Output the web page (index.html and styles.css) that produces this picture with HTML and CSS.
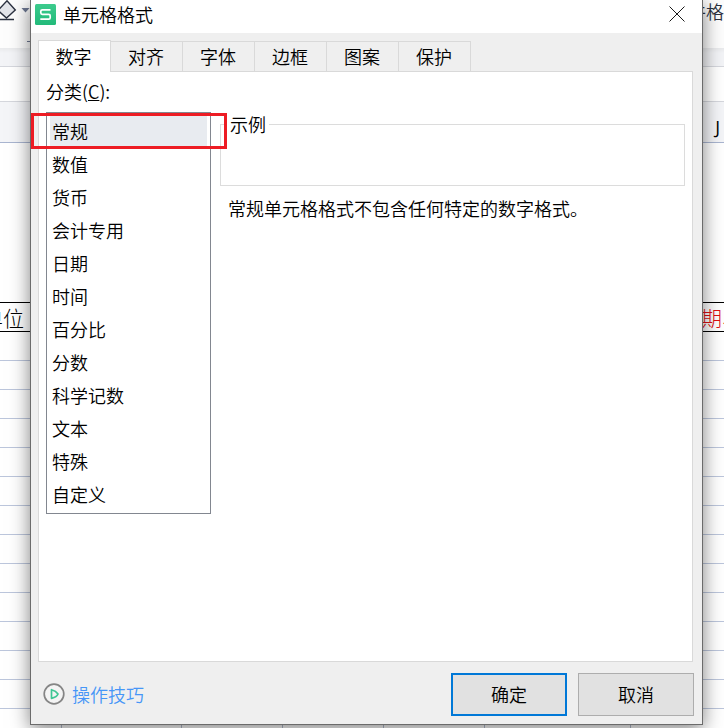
FILE: index.html
```html
<!DOCTYPE html>
<html lang="zh-CN">
<head>
<meta charset="utf-8">
<title>单元格格式</title>
<link rel="stylesheet" href="styles.css">
</head>
<body>
<div class="app">
  <div class="toolbar">
    <div class="toolbar-tools">
      <svg class="eraser" viewBox="0 0 30 42" width="30" height="42" aria-hidden="true">
        <path d="M-2 10.500L7 .8L15.300 10L6.500 18L-2 10.500" fill="#e3e5ea" stroke="#2b3140" stroke-width="1.400"/>
        <path d="M0 19.500H14" stroke="#2b3140" stroke-width="1.500"/>
        <path d="M21.500 8h8l-4 4.500z" fill="#6d7791"/>
        <path d="M27 41.500h3" stroke="#6d7791"/>
      </svg>
    </div>
    <span class="toolbar-label">条件格</span>
  </div>
  <div class="ribbon-gap"></div>
  <div class="formula-bar"></div>
  <div class="column-head"><span>J</span></div>
  <div class="sheet">
    <div class="head-row"><span class="unit">单位</span><span class="period">期、</span></div>
    <div class="grid-rows"></div>
    <div class="grid-foot"><i></i><i></i><i></i><i></i><i></i><i></i></div>
  </div>
</div>

<div class="dialog" role="dialog" aria-labelledby="dialog-title">
  <header class="titlebar">
    <svg class="logo" viewBox="0 0 21 21" width="21" height="21" aria-hidden="true">
      <defs><linearGradient id="g" x1="0" y1="0" x2="0" y2="1"><stop offset="0" stop-color="#3ccb8d"/><stop offset="1" stop-color="#22ba7a"/></linearGradient></defs>
      <rect width="21" height="21" rx="1.500" fill="url(#g)"/>
      <path d="M15.500 5.800H7.300Q5.800 5.800 5.800 7.300V8.800Q5.800 10.300 7.300 10.300H13.700Q15.200 10.300 15.200 11.800V13.700Q15.200 15.200 13.700 15.200H5.300" fill="none" stroke="#fff" stroke-width="1.700"/>
    </svg>
    <h1 id="dialog-title">单元格格式</h1>
    <button class="close" type="button" aria-label="关闭">
      <svg viewBox="0 0 16 16" width="16" height="16"><path d="M.5.5l15 15M15.500.5l-15 15" stroke="#000" stroke-width=".9"/></svg>
    </button>
  </header>
  <div class="tabs" role="tablist">
    <button type="button" role="tab" class="tab active" aria-selected="true">数字</button>
    <button type="button" role="tab" class="tab">对齐</button>
    <button type="button" role="tab" class="tab">字体</button>
    <button type="button" role="tab" class="tab">边框</button>
    <button type="button" role="tab" class="tab">图案</button>
    <button type="button" role="tab" class="tab">保护</button>
  </div>
  <main class="panel">
    <section class="category">
      <label id="category-label" for="category">分类(<u>C</u>):</label>
      <ul id="category" class="list" role="listbox" aria-labelledby="category-label">
        <li role="option" class="selected" aria-selected="true">常规</li>
        <li role="option">数值</li>
        <li role="option">货币</li>
        <li role="option">会计专用</li>
        <li role="option">日期</li>
        <li role="option">时间</li>
        <li role="option">百分比</li>
        <li role="option">分数</li>
        <li role="option">科学记数</li>
        <li role="option">文本</li>
        <li role="option">特殊</li>
        <li role="option">自定义</li>
      </ul>
      <div class="highlight"></div>
    </section>
    <section class="detail">
      <fieldset><legend>示例</legend></fieldset>
      <p>常规单元格格式不包含任何特定的数字格式。</p>
    </section>
  </main>
  <footer class="footer">
    <a href="#tips" class="tips">
      <svg viewBox="0 0 22 22" width="22" height="22" aria-hidden="true">
        <circle cx="11" cy="11" r="9.800" fill="#f4f4f4" stroke="#858585" stroke-width="1.700"/>
        <path d="M8.500 6.700V15.300Q14 14 15 11Q13 8 8.500 6.700Z" fill="none" stroke="#3fc694" stroke-width="1.700" stroke-linejoin="round"/>
      </svg>
      <span>操作技巧</span>
    </a>
    <button type="button" class="btn primary">确定</button>
    <button type="button" class="btn">取消</button>
  </footer>
</div>
</body>
</html>
```
FILE: styles.css
```css
* { box-sizing: border-box; }

body {
  margin: 0;
  height: 100vh;
  overflow: hidden;
  position: relative;
  font: 18px/22px "Noto Sans CJK SC", sans-serif;
  font-weight: 350;
  color: #000;
  background: #fff;
}

button { font: inherit; color: inherit; padding: 0; }

/* Spreadsheet behind the dialog */
.app { height: 100%; display: flex; flex-direction: column; }
.toolbar {
  flex: 0 0 48px;
  display: flex;
  justify-content: space-between;
  background: #fdfdfd;
  color: #2b3140;
}
.eraser { display: block; }
.toolbar-label { width: 28px; display: flex; justify-content: flex-end; white-space: nowrap; }
.ribbon-gap {
  flex: 0 0 19px;
  background: linear-gradient(#e9eaec, #f3f4f7 5px);
  border-bottom: 1px solid #d5d7dd;
}
.formula-bar { flex: 0 0 35px; border-bottom: 1px solid #d5d7dd; }
.column-head {
  flex: 0 0 41px;
  padding: 14px 4px 0 0;
  text-align: right;
  background: #f4f5f8;
  border-bottom: 1px solid #a9b5d0;
  font-family: "Open Sans", sans-serif;
  font-weight: 400;
}
.sheet { flex: 1; display: flex; flex-direction: column; padding-top: 159px; }
.head-row {
  flex: 0 0 30px;
  display: flex;
  justify-content: space-between;
  align-items: center;
  border: solid #000;
  border-width: 1px 0;
  font-size: 21px;
  font-weight: 300;
  overflow: hidden;
}
.unit { width: 24px; display: flex; justify-content: flex-end; white-space: nowrap; }
.period { width: 23px; color: #e01010; white-space: nowrap; }
.grid-rows {
  flex: 1;
  background: repeating-linear-gradient(transparent 0 28px, #bcc6dc 28px 29px);
}
.grid-foot { flex: 0 0 4px; display: flex; }
.grid-foot i { flex: 0 0 101px; border-right: 1px solid #b4bccf; }
.grid-foot i:first-child { flex-basis: 62px; }
.grid-foot i:nth-child(2) { flex-basis: 120px; }
.grid-foot i:last-child { flex-basis: 146px; }

/* Dialog window */
.dialog {
  position: absolute;
  inset: 0 21px 3px 30px;
  display: flex;
  flex-direction: column;
  background: #efefef;
  border: solid #6b6b6b;
  border-width: 0 1px 1px;
  box-shadow: 0 4px 18px rgba(0, 0, 0, .5);
}
.titlebar {
  flex: 0 0 33px;
  display: flex;
  align-items: center;
  gap: 7px;
  padding: 0 17px 5px 4px;
  background: #fff;
}
h1 { margin: 0; flex: 1; font-size: 18px; font-weight: inherit; }
.close { height: 16px; border: 0; background: none; }
.close svg { display: block; }

.tabs { flex: 0 0 39px; display: flex; align-items: flex-end; padding: 0 7px; margin-bottom: -1px; }
.tab {
  width: 72px;
  height: 31px;
  padding: 0 1px 2px 0;
  border: 1px solid #d9d9d9;
  border-left: 0;
  background: #efefef;
}
.tab.active {
  width: 73px;
  height: 32px;
  padding-right: 2px;
  border-left: 1px solid #d9d9d9;
  border-bottom: 0;
  background: #fff;
  z-index: 1;
}

.panel {
  flex: 1;
  display: flex;
  gap: 9px;
  margin: 0 9px 0 7px;
  padding: 8px 7px;
  background: #fff;
  border: 1px solid #d9d9d9;
}
.category { position: relative; flex: 0 0 165px; }
.category label { display: block; height: 32px; }
.list {
  margin: 0;
  padding: 3px 3px 1px;
  list-style: none;
  border: 1px solid #828790;
}
.list li { height: 33px; padding-left: 2px; line-height: 30px; }
.list .selected { background: #e8ebf0; }
.highlight {
  position: absolute;
  top: 33px;
  left: -15px;
  right: -16px;
  height: 36px;
  border: 3px solid #ed1c24;
}
.detail { flex: 1; padding-top: 33px; }
fieldset { height: 73px; margin: 0; padding: 0 6px; border: 1px solid #dcdcdc; }
legend { padding: 0 3px; }
.detail p { margin: 11px 8px; }

.footer {
  flex: 0 0 62px;
  display: flex;
  align-items: flex-start;
  gap: 11px;
  padding: 11px 8px 0 12px;
}
.tips {
  height: 42px;
  margin-right: auto;
  display: flex;
  align-items: center;
  gap: 7px;
  color: #4696f7;
  text-decoration: none;
}
.btn { width: 116px; height: 43px; padding-bottom: 2px; background: #e1e1e1; border: 1px solid #adadad; }
.btn.primary { border: 2px solid #0078d7; }
```
